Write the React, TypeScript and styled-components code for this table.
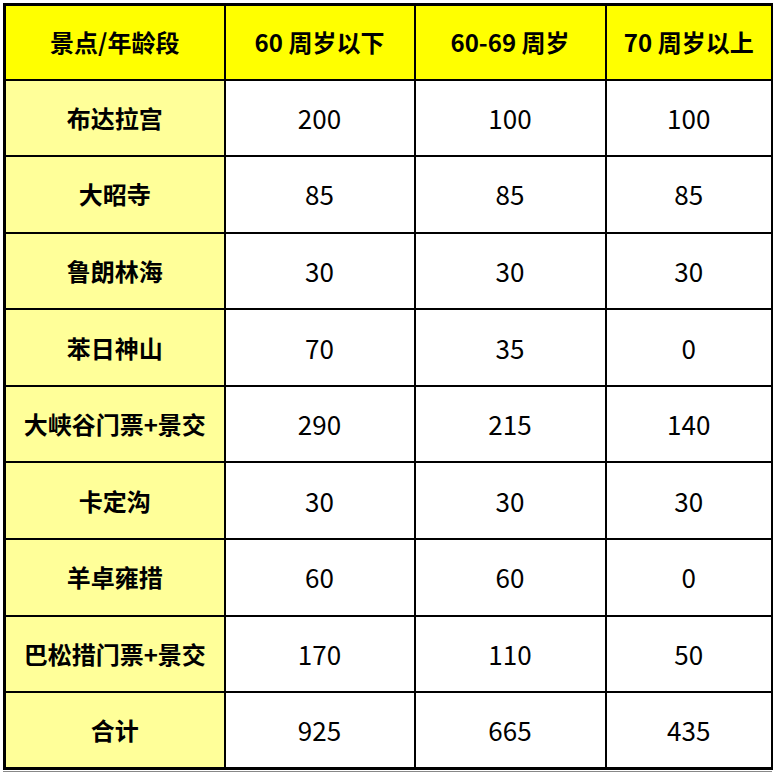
import React from "react";
import styled, { createGlobalStyle } from "styled-components";

const rows: [string, number, number, number][] = [
	["布达拉宫", 200, 100, 100],
	["大昭寺", 85, 85, 85],
	["鲁朗林海", 30, 30, 30],
	["苯日神山", 70, 35, 0],
	["大峡谷门票+景交", 290, 215, 140],
	["卡定沟", 30, 30, 30],
	["羊卓雍措", 60, 60, 0],
	["巴松措门票+景交", 170, 110, 50],
	["合计", 925, 665, 435],
];

const headers = ["景点/年龄段", "60 周岁以下", "60-69 周岁", "70 周岁以上"];

export default function App() {
	return (
		<>
			<GlobalStyle />
			<Page>
				<Frame>
					<Table>
						<colgroup>
							<col style={{ width: 220 }} />
							<col style={{ width: 190 }} />
							<col style={{ width: 191 }} />
							<col style={{ width: 167 }} />
						</colgroup>
						<thead>
							<HeadRow>
								{headers.map((h) => (
									<HeadCell key={h}>{h}</HeadCell>
								))}
							</HeadRow>
						</thead>
						<tbody>
							{rows.map(([name, a, b, c]) => (
								<BodyRow key={name}>
									<NameCell>{name}</NameCell>
									<NumCell>{a}</NumCell>
									<NumCell>{b}</NumCell>
									<NumCell>{c}</NumCell>
								</BodyRow>
							))}
						</tbody>
					</Table>
				</Frame>
			</Page>
		</>
	);
}

const GlobalStyle = createGlobalStyle`
	html, body {
		margin: 0;
		padding: 0;
		background: #fff;
	}
`;

const Page = styled.div`
	width: 773px;
	height: 776px;
	padding: 3px 0 0 3px;
	box-sizing: border-box;
	font-family: "Noto Sans CJK SC", "Noto Sans", sans-serif;
	color: #000;
`;

const Frame = styled.div`
	width: 769px;
	padding-bottom: 1px;
	border-bottom: 1px solid #888;
`;

const Table = styled.table`
	width: 768px;
	border-collapse: collapse;
	table-layout: fixed;
	border: 3px solid #000;
`;

const HeadRow = styled.tr`
	height: 75px;
`;

const BodyRow = styled.tr`
	height: 76.6px;
`;

const Cell = styled.td`
	border: 2.5px solid #000;
	text-align: center;
	vertical-align: middle;
	padding: 0;
	font-size: 24px;
	line-height: 1;
`;

const HeadCell = styled(Cell).attrs({ as: "th" })`
	background: #ffff00;
	font-weight: 700;
`;

const NameCell = styled(Cell)`
	background: #ffff99;
	font-weight: 700;
`;

const NumCell = styled(Cell)`
	background: #fff;
	font-weight: 400;
	font-size: 26px;
`;
